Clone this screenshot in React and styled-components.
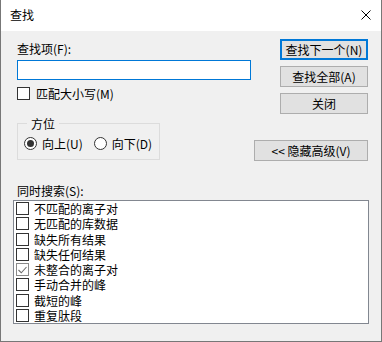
import React from "react";
import styled, { createGlobalStyle, css } from "styled-components";

const GlobalStyle = createGlobalStyle`
  html, body { margin: 0; padding: 0; background: #f0f0f0; }
  * { box-sizing: border-box; }
  body {
    font-family: "Noto Sans CJK SC", "Noto Sans", sans-serif;
    font-size: 12px;
    color: #000;
  }
`;

const Window = styled.div`
  width: 382px;
  height: 342px;
  background: #f0f0f0;
  border: 1px solid #777;
  border-top: none;
  display: flex;
  flex-direction: column;
  overflow: hidden;
`;

const TitleBar = styled.div`
  height: 31px;
  background: #fff;
  display: flex;
  align-items: flex-start;
  justify-content: space-between;
  padding: 7px 10px 0 9px;
`;

const Title = styled.div`
  line-height: 15px;
`;

const CloseIcon = styled.svg`
  width: 10px;
  height: 10px;
  margin-top: 3px;
`;

const Body = styled.div`
  flex: 1;
  padding: 0 13px 0 16px;
  display: flex;
  flex-direction: column;
`;

const TopRow = styled.div`
  display: flex;
  justify-content: space-between;
  align-items: flex-start;
`;

const LeftCol = styled.div`
  width: 234px;
  padding-top: 10px;
  display: flex;
  flex-direction: column;
`;

const Label = styled.div`
  line-height: 15px;
  height: 15px;
  white-space: nowrap;
`;

const TextInput = styled.input`
  margin-top: 4px;
  height: 20px;
  width: 234px;
  border: 1px solid #0078d7;
  background: #fff;
  outline: none;
  padding: 0 3px;
  font: inherit;
`;

const CheckRow = styled.label`
  margin-top: ${(p) => p.$mt || 0}px;
  display: flex;
  align-items: center;
  height: 15px;
  line-height: 15px;
  gap: 6px;
  white-space: nowrap;
`;

const Box = styled.span`
  width: 13px;
  height: 13px;
  flex: none;
  background: #fff;
  border: 1px solid ${(p) => (p.$checked ? "#8a8a8a" : "#333")};
  display: flex;
  align-items: center;
  justify-content: center;
`;

const GroupBox = styled.fieldset`
  margin: 15px 0 0 0;
  width: 143px;
  padding: 0 0 8px 6px;
  border: 1px solid #dcdcdc;
  min-inline-size: 0;
`;

const Legend = styled.legend`
  margin-left: 3px;
  padding: 0 4px;
  line-height: 15px;
`;

const RadioRow = styled.div`
  display: flex;
  align-items: center;
  gap: 11px;
  margin-top: 5px;
  height: 15px;
`;

const RadioLabel = styled.label`
  display: flex;
  align-items: center;
  gap: 5px;
  line-height: 15px;
  white-space: nowrap;
`;

const Circle = styled.span`
  width: 13px;
  height: 13px;
  border-radius: 50%;
  border: 1px solid #333;
  background: #fff;
  display: flex;
  align-items: center;
  justify-content: center;
  &::after {
    content: "";
    width: 7px;
    height: 7px;
    border-radius: 50%;
    background: ${(p) => (p.$on ? "#333" : "transparent")};
  }
`;

const RightCol = styled.div`
  padding-top: 8px;
  display: flex;
  flex-direction: column;
  align-items: flex-end;
  gap: 6px;
`;

const Button = styled.button`
  height: 21px;
  width: ${(p) => p.$w || 88}px;
  margin-top: ${(p) => p.$mt || 0}px;
  background: #e1e1e1;
  border: 1px solid #adadad;
  font: inherit;
  line-height: 15px;
  padding: 0;
  color: #000;
  white-space: nowrap;
  ${(p) =>
    p.$default &&
    css`
      border: 2px solid #0078d7;
    `}
`;

const ListLabel = styled(Label)`
  margin-top: 22px;
`;

const ListBox = styled.div`
  margin: 2px -1px 0 -4px;
  height: 124px;
  background: #fff;
  border: 1px solid #828790;
  padding: 0 0 0 2px;
  display: flex;
  flex-direction: column;
`;

const ListItem = styled.div`
  height: 15.25px;
  display: flex;
  align-items: center;
  gap: 5px;
  line-height: 15px;
  white-space: nowrap;
`;

const ItemText = styled.span`
  display: block;
  height: 15px;
  line-height: 15px;
  overflow: hidden;
`;

const Check = ({ checked }) => (
  <Box $checked={checked}>
    {checked && (
      <svg width="9" height="8" viewBox="0 0 9 8">
        <path d="M0.5 4 L3.3 6.8 L8.5 1" fill="none" stroke="#6d6d6d" strokeWidth="1.1" />
      </svg>
    )}
  </Box>
);

const items = [
  ["不匹配的离子对", false],
  ["无匹配的库数据", false],
  ["缺失所有结果", false],
  ["缺失任何结果", false],
  ["未整合的离子对", true],
  ["手动合并的峰", false],
  ["截短的峰", false],
  ["重复肽段", false],
];

export default function App() {
  return (
    <>
      <GlobalStyle />
      <Window>
        <TitleBar>
          <Title>查找</Title>
          <CloseIcon viewBox="0 0 10 10">
            <path d="M0.5 0.5 L9.5 9.5 M9.5 0.5 L0.5 9.5" stroke="#000" strokeWidth="1" />
          </CloseIcon>
        </TitleBar>
        <Body>
          <TopRow>
            <LeftCol>
              <Label>查找项(F):</Label>
              <TextInput />
              <CheckRow $mt={6}>
                <Check checked={false} />
                <span>匹配大小写(M)</span>
              </CheckRow>
              <GroupBox>
                <Legend>方位</Legend>
                <RadioRow>
                  <RadioLabel>
                    <Circle $on />
                    <span>向上(U)</span>
                  </RadioLabel>
                  <RadioLabel>
                    <Circle />
                    <span>向下(D)</span>
                  </RadioLabel>
                </RadioRow>
              </GroupBox>
            </LeftCol>
            <RightCol>
              <Button $default>查找下一个(N)</Button>
              <Button>查找全部(A)</Button>
              <Button>关闭</Button>
              <Button $w={114} $mt={20}>&lt;&lt; 隐藏高级(V)</Button>
            </RightCol>
          </TopRow>
          <ListLabel>同时搜索(S):</ListLabel>
          <ListBox>
            {items.map(([t, c]) => (
              <ListItem key={t}>
                <Check checked={c} />
                <ItemText>{t}</ItemText>
              </ListItem>
            ))}
          </ListBox>
        </Body>
      </Window>
    </>
  );
}
